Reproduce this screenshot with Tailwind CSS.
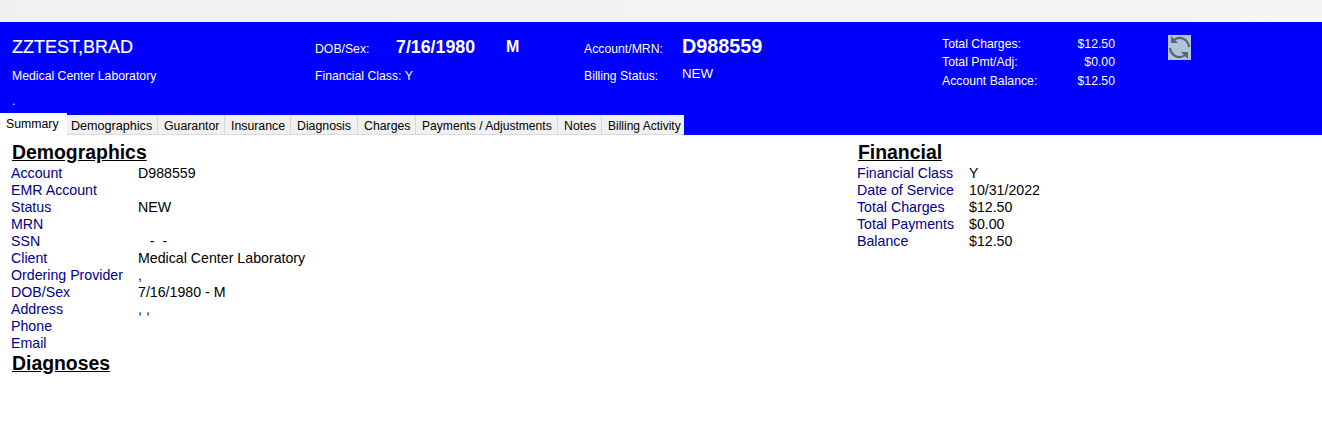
<!DOCTYPE html>
<html lang="en">
<head>
  <meta charset="UTF-8" />
  <title>Account Summary</title>
  <script src="https://cdn.jsdelivr.net/npm/@tailwindcss/browser@4"></script>
</head>
<body class="bg-white font-['Liberation_Sans',Arial,sans-serif] overflow-hidden">
  <div class="w-[1322px] h-[426px]">
    <!-- top strip -->
    <div class="h-[22px] bg-gradient-to-r from-[#f0f0f0] to-[#f5f5f5]"></div>

    <!-- patient banner -->
    <div class="h-[113px] bg-[#0000ff] text-white flex flex-col">
      <div class="flex h-[91px] text-[12.25px]">
        <div class="w-[315px] pl-3 pt-[14px] flex flex-col">
          <div class="h-[22px] leading-[22px] text-[18px] [-webkit-text-stroke:0.2px_white]">ZZTEST,BRAD</div>
          <div class="mt-[9px] h-[18px] leading-[18px]">Medical Center Laboratory</div>
          <div class="mt-[9px] h-[14px] leading-[14px]">.</div>
        </div>
        <div class="w-[269px] pt-[14px] flex flex-col">
          <div class="flex h-[22px] items-center">
            <span class="w-[81px] pt-1">DOB/Sex:</span>
            <span class="w-[110px] font-bold text-[17.8px]">7/16/1980</span>
            <span class="font-bold text-[16px]">M</span>
          </div>
          <div class="mt-[9px] h-[18px] leading-[18px]">Financial Class: Y</div>
        </div>
        <div class="w-[358px] pt-[14px] flex flex-col">
          <div class="flex h-[22px] items-center">
            <span class="w-[98px] pt-1">Account/MRN:</span>
            <span class="font-bold text-[19.8px]">D988559</span>
          </div>
          <div class="flex mt-[9px] h-[18px] leading-[18px]">
            <span class="w-[98px]">Billing Status:</span>
            <span class="-mt-[2px] text-[13.3px]">NEW</span>
          </div>
        </div>
        <div class="w-[173px] pt-[13px] flex flex-col">
          <div class="flex justify-between h-[18px] leading-[18px]"><span>Total Charges:</span><span>$12.50</span></div>
          <div class="flex justify-between h-[18px] leading-[18px]"><span>Total Pmt/Adj:</span><span>$0.00</span></div>
          <div class="flex justify-between h-[19px] leading-[20px]"><span>Account Balance:</span><span>$12.50</span></div>
        </div>
        <div class="ml-[53px] pt-[13px]">
          <div class="w-[23px] h-[25px] bg-[#b0c4de]">
            <svg width="23" height="25" viewBox="0 0 23 25" fill="none">
              <path d="M6 5 A9.5 10.5 0 0 1 21 12" stroke="#5f6468" stroke-width="2.2" />
              <path d="M2 13 A9.5 10.5 0 0 0 17 20" stroke="#5f6468" stroke-width="2.2" />
              <path d="M3 1 L3 8 L10 8 Z" fill="#5f6468" />
              <path d="M20 24 L20 17 L13 17 Z" fill="#5f6468" />
            </svg>
          </div>
        </div>
      </div>

      <!-- tabs -->
      <div class="flex h-[22px] items-end text-[12.3px] text-black">
        <div class="w-[67px] h-[22px] bg-white pl-[6px] pt-[3px] leading-[17px]">Summary</div>
        <div class="w-[91px] h-[20px] bg-[#f0f0f0] border-r border-b border-[#d9d9d9] pl-[4px] leading-[23px] text-[12.6px]">Demographics</div>
        <div class="w-[67px] h-[20px] bg-[#f0f0f0] border-r border-b border-[#d9d9d9] pl-[6px] leading-[23px]">Guarantor</div>
        <div class="w-[66px] h-[20px] bg-[#f0f0f0] border-r border-b border-[#d9d9d9] pl-[6px] leading-[23px]">Insurance</div>
        <div class="w-[67px] h-[20px] bg-[#f0f0f0] border-r border-b border-[#d9d9d9] pl-[6px] leading-[23px]">Diagnosis</div>
        <div class="w-[58px] h-[20px] bg-[#f0f0f0] border-r border-b border-[#d9d9d9] pl-[6px] leading-[23px]">Charges</div>
        <div class="w-[142px] h-[20px] bg-[#f0f0f0] border-r border-b border-[#d9d9d9] pl-[6px] leading-[23px] whitespace-nowrap text-[12.1px]">Payments / Adjustments</div>
        <div class="w-[44px] h-[20px] bg-[#f0f0f0] border-r border-b border-[#d9d9d9] pl-[6px] leading-[23px]">Notes</div>
        <div class="w-[82px] h-[20px] bg-[#f0f0f0] border-b border-[#d9d9d9] pl-[6px] leading-[23px] whitespace-nowrap text-[12px]">Billing Activity</div>
      </div>
    </div>

    <!-- summary content -->
    <div class="flex text-[14.2px] leading-[17px] text-black">
      <div class="w-[857px] pl-[11px] pt-[6px]">
        <h2 class="ml-[1px] h-[24px] text-[19.4px] leading-[22px] font-bold underline">Demographics</h2>
        <div class="grid grid-cols-[127px_1fr] auto-rows-[17px] text-[#00008b]">
          <div>Account</div><div class="text-black">D988559</div>
          <div>EMR Account</div><div></div>
          <div>Status</div><div class="text-black">NEW</div>
          <div>MRN</div><div></div>
          <div>SSN</div><div class="text-black whitespace-pre">   -  -</div>
          <div>Client</div><div class="text-black">Medical Center Laboratory</div>
          <div>Ordering Provider</div><div>,</div>
          <div>DOB/Sex</div><div class="text-black">7/16/1980 - M</div>
          <div>Address</div><div>, ,</div>
          <div>Phone</div><div></div>
          <div>Email</div><div></div>
        </div>
        <h2 class="ml-[1px] h-[22px] text-[19.4px] leading-[22px] font-bold underline">Diagnoses</h2>
      </div>
      <div class="pt-[6px]">
        <h2 class="ml-[1px] h-[24px] text-[19.4px] leading-[22px] font-bold underline">Financial</h2>
        <div class="grid grid-cols-[112px_1fr] auto-rows-[17px] text-[#00008b]">
          <div>Financial Class</div><div class="text-black">Y</div>
          <div>Date of Service</div><div class="text-black">10/31/2022</div>
          <div>Total Charges</div><div class="text-black">$12.50</div>
          <div>Total Payments</div><div class="text-black">$0.00</div>
          <div>Balance</div><div class="text-black">$12.50</div>
        </div>
      </div>
    </div>
  </div>
</body>
</html>
